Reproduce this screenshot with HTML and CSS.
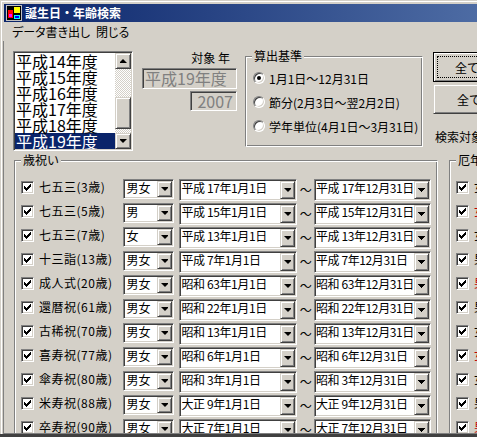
FILE: index.html
```html
<!DOCTYPE html>
<html lang="ja">
<head>
    <meta charset="UTF-8">
    <meta name="viewport" content="width=device-width, initial-scale=1.0">
    <title>誕生日・年齢検索</title>
    <link rel="stylesheet" href="styles.css">
</head>
<body>
    <svg class="defs" width="0" height="0">
        <symbol id="tick" viewBox="0 0 7 7">
            <path d="M6 0h1v1h-1z M5 1h2v1h-2z M0 2h1v1h-1z M4 2h3v1h-3z M0 3h2v1h-2z M3 3h3v1h-3z M0 4h5v1h-5z M1 5h3v1h-3z M2 6h1v1h-1z"/>
        </symbol>
    </svg>

    <div class="window">
        <div class="titlebar">
            <svg class="app-icon" width="16" height="16" viewBox="0 0 16 16" shape-rendering="crispEdges">
                <rect x="0" y="0" width="16" height="16" fill="#c0c0c0"/>
                <rect x="1" y="1" width="14" height="14" fill="#000"/>
                <rect x="2" y="5" width="5" height="8" fill="#ff0000"/>
                <rect x="3" y="9" width="3" height="3" fill="#ff00ff"/>
                <rect x="7" y="1" width="8" height="8" fill="#000"/>
                <rect x="8" y="2" width="6" height="6" fill="#ffff00"/>
                <rect x="8" y="10" width="6" height="4" fill="#00ffff"/>
                <rect x="9" y="11" width="4" height="2" fill="#0000ff"/>
            </svg>
            <span class="title">誕生日・年齢検索</span>
        </div>

        <div class="menubar">
            <span class="menu-item">データ書き出し</span>
            <span class="menu-item">閉じる</span>
        </div>

        <div class="client">
            <div class="top-section">
                <div class="listbox sunken">
                    <div class="list-items">
                        <div class="list-item">平成14年度</div>
                        <div class="list-item">平成15年度</div>
                        <div class="list-item">平成16年度</div>
                        <div class="list-item">平成17年度</div>
                        <div class="list-item">平成18年度</div>
                        <div class="list-item selected">平成19年度</div>
                    </div>
                    <div class="vscroll">
                        <div class="scroll-btn raised"><span class="arrow up"></span></div>
                        <div class="scroll-track"></div>
                        <div class="scroll-thumb raised"></div>
                        <div class="scroll-track end"></div>
                        <div class="scroll-btn raised"><span class="arrow"></span></div>
                    </div>
                </div>

                <div class="target-year">
                    <div class="field-label">対象 年</div>
                    <div class="textbox sunken">平成19年度</div>
                    <div class="textbox year sunken">2007</div>
                </div>

                <div class="group basis">
                    <div class="group-title">算出基準</div>
                    <div class="radio-list">
                        <div class="radio-row"><span class="radio checked"></span>1月1日～12月31日</div>
                        <div class="radio-row"><span class="radio"></span>節分(2月3日～翌2月2日)</div>
                        <div class="radio-row"><span class="radio"></span>学年単位(4月1日～3月31日)</div>
                    </div>
                </div>

                <div class="actions">
                    <button class="btn default"><span class="focus-rect">全て選択</span></button>
                    <button class="btn raised">全て解除</button>
                    <div class="search-label">検索対象年齢</div>
                </div>
            </div>

            <div class="groups">
                <div class="group celebrations">
                    <div class="group-title">歳祝い</div>
                    <div class="age-list">
                        <div class="age-row">
                            <span class="check sunken"><svg class="tick"><use href="#tick"/></svg></span>
                            <span class="age-label">七五三(3歳)</span>
                            <span class="combo gender sunken"><span class="combo-text">男女</span><span class="drop-btn raised"><span class="arrow"></span></span></span>
                            <span class="combo date sunken"><span class="combo-text">平成 17年1月1日</span><span class="drop-btn raised"><span class="arrow"></span></span></span>
                            <span class="tilde">～</span>
                            <span class="combo date to sunken"><span class="combo-text">平成 17年12月31日</span><span class="drop-btn raised"><span class="arrow"></span></span></span>
                        </div>
                        <div class="age-row">
                            <span class="check sunken"><svg class="tick"><use href="#tick"/></svg></span>
                            <span class="age-label">七五三(5歳)</span>
                            <span class="combo gender sunken"><span class="combo-text">男</span><span class="drop-btn raised"><span class="arrow"></span></span></span>
                            <span class="combo date sunken"><span class="combo-text">平成 15年1月1日</span><span class="drop-btn raised"><span class="arrow"></span></span></span>
                            <span class="tilde">～</span>
                            <span class="combo date to sunken"><span class="combo-text">平成 15年12月31日</span><span class="drop-btn raised"><span class="arrow"></span></span></span>
                        </div>
                        <div class="age-row">
                            <span class="check sunken"><svg class="tick"><use href="#tick"/></svg></span>
                            <span class="age-label">七五三(7歳)</span>
                            <span class="combo gender sunken"><span class="combo-text">女</span><span class="drop-btn raised"><span class="arrow"></span></span></span>
                            <span class="combo date sunken"><span class="combo-text">平成 13年1月1日</span><span class="drop-btn raised"><span class="arrow"></span></span></span>
                            <span class="tilde">～</span>
                            <span class="combo date to sunken"><span class="combo-text">平成 13年12月31日</span><span class="drop-btn raised"><span class="arrow"></span></span></span>
                        </div>
                        <div class="age-row">
                            <span class="check sunken"><svg class="tick"><use href="#tick"/></svg></span>
                            <span class="age-label">十三詣(13歳)</span>
                            <span class="combo gender sunken"><span class="combo-text">男女</span><span class="drop-btn raised"><span class="arrow"></span></span></span>
                            <span class="combo date sunken"><span class="combo-text">平成 7年1月1日</span><span class="drop-btn raised"><span class="arrow"></span></span></span>
                            <span class="tilde">～</span>
                            <span class="combo date to sunken"><span class="combo-text">平成 7年12月31日</span><span class="drop-btn raised"><span class="arrow"></span></span></span>
                        </div>
                        <div class="age-row">
                            <span class="check sunken"><svg class="tick"><use href="#tick"/></svg></span>
                            <span class="age-label">成人式(20歳)</span>
                            <span class="combo gender sunken"><span class="combo-text">男女</span><span class="drop-btn raised"><span class="arrow"></span></span></span>
                            <span class="combo date sunken"><span class="combo-text">昭和 63年1月1日</span><span class="drop-btn raised"><span class="arrow"></span></span></span>
                            <span class="tilde">～</span>
                            <span class="combo date to sunken"><span class="combo-text">昭和 63年12月31日</span><span class="drop-btn raised"><span class="arrow"></span></span></span>
                        </div>
                        <div class="age-row">
                            <span class="check sunken"><svg class="tick"><use href="#tick"/></svg></span>
                            <span class="age-label">還暦祝(61歳)</span>
                            <span class="combo gender sunken"><span class="combo-text">男女</span><span class="drop-btn raised"><span class="arrow"></span></span></span>
                            <span class="combo date sunken"><span class="combo-text">昭和 22年1月1日</span><span class="drop-btn raised"><span class="arrow"></span></span></span>
                            <span class="tilde">～</span>
                            <span class="combo date to sunken"><span class="combo-text">昭和 22年12月31日</span><span class="drop-btn raised"><span class="arrow"></span></span></span>
                        </div>
                        <div class="age-row">
                            <span class="check sunken"><svg class="tick"><use href="#tick"/></svg></span>
                            <span class="age-label">古稀祝(70歳)</span>
                            <span class="combo gender sunken"><span class="combo-text">男女</span><span class="drop-btn raised"><span class="arrow"></span></span></span>
                            <span class="combo date sunken"><span class="combo-text">昭和 13年1月1日</span><span class="drop-btn raised"><span class="arrow"></span></span></span>
                            <span class="tilde">～</span>
                            <span class="combo date to sunken"><span class="combo-text">昭和 13年12月31日</span><span class="drop-btn raised"><span class="arrow"></span></span></span>
                        </div>
                        <div class="age-row">
                            <span class="check sunken"><svg class="tick"><use href="#tick"/></svg></span>
                            <span class="age-label">喜寿祝(77歳)</span>
                            <span class="combo gender sunken"><span class="combo-text">男女</span><span class="drop-btn raised"><span class="arrow"></span></span></span>
                            <span class="combo date sunken"><span class="combo-text">昭和 6年1月1日</span><span class="drop-btn raised"><span class="arrow"></span></span></span>
                            <span class="tilde">～</span>
                            <span class="combo date to sunken"><span class="combo-text">昭和 6年12月31日</span><span class="drop-btn raised"><span class="arrow"></span></span></span>
                        </div>
                        <div class="age-row">
                            <span class="check sunken"><svg class="tick"><use href="#tick"/></svg></span>
                            <span class="age-label">傘寿祝(80歳)</span>
                            <span class="combo gender sunken"><span class="combo-text">男女</span><span class="drop-btn raised"><span class="arrow"></span></span></span>
                            <span class="combo date sunken"><span class="combo-text">昭和 3年1月1日</span><span class="drop-btn raised"><span class="arrow"></span></span></span>
                            <span class="tilde">～</span>
                            <span class="combo date to sunken"><span class="combo-text">昭和 3年12月31日</span><span class="drop-btn raised"><span class="arrow"></span></span></span>
                        </div>
                        <div class="age-row">
                            <span class="check sunken"><svg class="tick"><use href="#tick"/></svg></span>
                            <span class="age-label">米寿祝(88歳)</span>
                            <span class="combo gender sunken"><span class="combo-text">男女</span><span class="drop-btn raised"><span class="arrow"></span></span></span>
                            <span class="combo date sunken"><span class="combo-text">大正 9年1月1日</span><span class="drop-btn raised"><span class="arrow"></span></span></span>
                            <span class="tilde">～</span>
                            <span class="combo date to sunken"><span class="combo-text">大正 9年12月31日</span><span class="drop-btn raised"><span class="arrow"></span></span></span>
                        </div>
                        <div class="age-row">
                            <span class="check sunken"><svg class="tick"><use href="#tick"/></svg></span>
                            <span class="age-label">卒寿祝(90歳)</span>
                            <span class="combo gender sunken"><span class="combo-text">男女</span><span class="drop-btn raised"><span class="arrow"></span></span></span>
                            <span class="combo date sunken"><span class="combo-text">大正 7年1月1日</span><span class="drop-btn raised"><span class="arrow"></span></span></span>
                            <span class="tilde">～</span>
                            <span class="combo date to sunken"><span class="combo-text">大正 7年12月31日</span><span class="drop-btn raised"><span class="arrow"></span></span></span>
                        </div>
                    </div>
                </div>

                <div class="group yakudoshi">
                    <div class="group-title">厄年</div>
                    <div class="age-list">
                        <div class="yaku-row"><span class="check sunken"><svg class="tick"><use href="#tick"/></svg></span><span class="yaku-label">女 18歳(前厄)</span></div>
                        <div class="yaku-row"><span class="check sunken"><svg class="tick"><use href="#tick"/></svg></span><span class="yaku-label major">女 19歳(本厄)</span></div>
                        <div class="yaku-row"><span class="check sunken"><svg class="tick"><use href="#tick"/></svg></span><span class="yaku-label">女 20歳(後厄)</span></div>
                        <div class="yaku-row"><span class="check sunken"><svg class="tick"><use href="#tick"/></svg></span><span class="yaku-label">男 24歳(前厄)</span></div>
                        <div class="yaku-row"><span class="check sunken"><svg class="tick"><use href="#tick"/></svg></span><span class="yaku-label major">男 25歳(本厄)</span></div>
                        <div class="yaku-row"><span class="check sunken"><svg class="tick"><use href="#tick"/></svg></span><span class="yaku-label">男 26歳(後厄)</span></div>
                        <div class="yaku-row"><span class="check sunken"><svg class="tick"><use href="#tick"/></svg></span><span class="yaku-label">女 32歳(前厄)</span></div>
                        <div class="yaku-row"><span class="check sunken"><svg class="tick"><use href="#tick"/></svg></span><span class="yaku-label major">女 33歳(本厄)</span></div>
                        <div class="yaku-row"><span class="check sunken"><svg class="tick"><use href="#tick"/></svg></span><span class="yaku-label">女 34歳(後厄)</span></div>
                        <div class="yaku-row"><span class="check sunken"><svg class="tick"><use href="#tick"/></svg></span><span class="yaku-label">男 41歳(前厄)</span></div>
                        <div class="yaku-row"><span class="check sunken"><svg class="tick"><use href="#tick"/></svg></span><span class="yaku-label major">男 42歳(本厄)</span></div>
                    </div>
                </div>
            </div>
        </div>
    </div>
</body>
</html>
```

FILE: styles.css
```css
* {
    box-sizing: border-box;
}
html, body {
    margin: 0;
    padding: 0;
}
body {
    width: 477px;
    height: 437px;
    overflow: hidden;
    background-color: #d4d0c8;
    font-family: "Noto Sans CJK JP", "Noto Sans", sans-serif;
    font-size: 12px;
    color: #000;
}
.defs {
    position: absolute;
    width: 0;
    height: 0;
}

/* shared 3d borders */
.sunken {
    border: 1px solid;
    border-color: #808080 #fff #fff #808080;
    box-shadow: inset 1px 1px #404040, inset -1px -1px #d4d0c8;
    padding: 1px;
}
.raised {
    background-color: #d4d0c8;
    border: 1px solid;
    border-color: #d4d0c8 #404040 #404040 #d4d0c8;
    box-shadow: inset 1px 1px #fff, inset -1px -1px #808080;
}
.arrow {
    width: 7px;
    height: 4px;
    background-color: #000;
    clip-path: polygon(0 0, 7px 0, 7px 1px, 6px 1px, 6px 2px, 5px 2px, 5px 3px, 4px 3px, 4px 4px, 3px 4px, 3px 3px, 2px 3px, 2px 2px, 1px 2px, 1px 1px, 0 1px);
}
.arrow.up {
    transform: scaleY(-1);
}

/* window frame */
.window {
    width: 560px;
    height: 437px;
    padding: 4px 0 0 4px;
    border-bottom: 3px solid #404040;
    box-shadow: inset 1px 1px #d4d0c8, inset 2px 2px #fff;
}
.titlebar {
    height: 18px;
    display: flex;
    align-items: center;
    gap: 3px;
    padding-left: 2px;
    background: linear-gradient(to right, #0a246a 0, #a6caf0 1100px);
    color: #fff;
    font-weight: bold;
}
.app-icon {
    display: block;
    flex-shrink: 0;
}
.title {
    line-height: 18px;
}
.menubar {
    height: 18px;
    margin-top: 1px;
    display: grid;
    grid-template-columns: 84px auto;
    align-items: center;
    padding-left: 8px;
    line-height: 18px;
    font-feature-settings: "palt";
}
.menu-item {
    white-space: nowrap;
}
.client {
    height: 393px;
    margin-left: -1px;
    border-left: 1px solid #808080;
    border-bottom: 1px solid #808080;
    overflow: hidden;
}

/* top part */
.top-section {
    display: flex;
    align-items: flex-start;
    height: 119px;
}
.listbox {
    display: flex;
    width: 120px;
    height: 100px;
    margin: 10px 0 0 9px;
    background-color: #fff;
}
.list-items {
    flex: 1;
    overflow: hidden;
}
.list-item {
    height: 16px;
    line-height: 16px;
    font-size: 16px;
    padding-left: 1px;
    white-space: nowrap;
}
.list-item.selected {
    background-color: #0a246a;
    color: #fff;
}
.vscroll {
    width: 16px;
    display: flex;
    flex-direction: column;
}
.scroll-btn {
    height: 16px;
    display: flex;
    align-items: center;
    justify-content: center;
}
.scroll-track {
    height: 28px;
    background: repeating-conic-gradient(#fff 0 25%, #d4d0c8 0 50%) 0 0 / 2px 2px;
}
.scroll-track.end {
    height: auto;
    flex: 1;
}
.scroll-thumb {
    height: 32px;
}

.target-year {
    display: flex;
    flex-direction: column;
    width: 95px;
    margin: 10px 0 0 9px;
}
.field-label {
    line-height: 14px;
    text-align: right;
    padding-right: 7px;
}
.textbox {
    height: 21px;
    margin-top: 3px;
    padding: 1px 1px 1px 2px;
    background-color: #d4d0c8;
    color: #808080;
    font-size: 16px;
    line-height: 17px;
    white-space: nowrap;
    overflow: hidden;
}
.textbox.year {
    width: 47px;
    height: 20px;
    margin-top: 2px;
    align-self: flex-end;
    text-align: right;
    padding-right: 3px;
    line-height: 16px;
}

.group {
    border: 1px solid;
    border-color: #808080 #fff #fff #808080;
    box-shadow: inset 1px 1px #fff, inset -1px -1px #808080;
    padding: 0 6px;
}
.group-title {
    width: fit-content;
    margin-top: -8px;
    padding: 0 2px;
    line-height: 14px;
    background-color: #d4d0c8;
    white-space: nowrap;
}
.basis {
    width: 178px;
    height: 91px;
    margin: 15px 0 0 8px;
}
.radio-list {
    margin-top: 3px;
}
.radio-row {
    display: flex;
    align-items: center;
    gap: 4px;
    height: 24px;
    padding-left: 1px;
    white-space: nowrap;
}
.radio {
    width: 12px;
    height: 12px;
    flex-shrink: 0;
    display: flex;
    align-items: center;
    justify-content: center;
    border-radius: 50%;
    border: 1px solid;
    border-color: #808080 #fff #fff #808080;
    box-shadow: inset 1px 1px #404040, inset -1px -1px #d4d0c8;
    background-color: #fff;
}
.radio.checked::after {
    content: "";
    width: 4px;
    height: 4px;
    border-radius: 50%;
    background-color: #000;
}

.actions {
    display: flex;
    flex-direction: column;
    margin: 11px 0 0 10px;
}
.btn {
    width: 92px;
    height: 30px;
    padding: 0;
    display: flex;
    align-items: center;
    justify-content: center;
    font: inherit;
    color: #000;
}
.btn + .btn {
    margin-top: 2px;
    padding-left: 4px;
}
.btn.default {
    background-color: #d4d0c8;
    border: 1px solid #000;
    box-shadow: inset 1px 1px #fff, inset -1px -1px #808080, inset -2px -2px #d4d0c8;
    padding: 3px;
    align-items: stretch;
}
.focus-rect {
    flex: 1;
    display: flex;
    align-items: center;
    justify-content: center;
    border: 1px dotted #000;
}
.search-label {
    margin: 16px 0 0 2px;
    line-height: 14px;
    white-space: nowrap;
}

/* groups with rows */
.groups {
    display: flex;
    align-items: flex-start;
    padding-left: 10px;
}
.celebrations {
    width: 424px;
    height: 290px;
}
.yakudoshi {
    width: 140px;
    height: 290px;
    margin-left: 11px;
}
.age-list {
    margin-top: 8px;
}
.age-row,
.yaku-row {
    display: flex;
    align-items: flex-start;
    height: 24px;
}
.check {
    width: 13px;
    height: 13px;
    padding: 2px;
    margin-top: 6px;
    flex-shrink: 0;
    background-color: #fff;
}
.tick {
    display: block;
    width: 7px;
    height: 7px;
}
.age-label {
    width: 87px;
    margin-left: 5px;
    line-height: 24px;
    letter-spacing: 0.5px;
    white-space: nowrap;
}
.combo {
    display: flex;
    height: 20px;
    margin-top: 4px;
    background-color: #fff;
    flex-shrink: 0;
}
.combo.gender {
    width: 51px;
}
.combo.date {
    width: 118px;
    height: 22px;
    margin-left: 5px;
}
.combo.date.to {
    width: 117px;
    margin-left: 0;
}
.combo-text {
    flex: 1;
    padding-left: 1px;
    line-height: 14px;
    white-space: nowrap;
    overflow: hidden;
}
.date .combo-text {
    padding-left: 0;
    line-height: 13px;
    letter-spacing: -0.4px;
}
.drop-btn {
    width: 15px;
    flex-shrink: 0;
    display: flex;
    align-items: center;
    justify-content: center;
}
.tilde {
    width: 17px;
    padding-top: 6px;
    line-height: 18px;
    text-align: center;
}
.yaku-label {
    margin-left: 5px;
    line-height: 24px;
    white-space: nowrap;
}
.yaku-label.major {
    color: #c00000;
}
```
